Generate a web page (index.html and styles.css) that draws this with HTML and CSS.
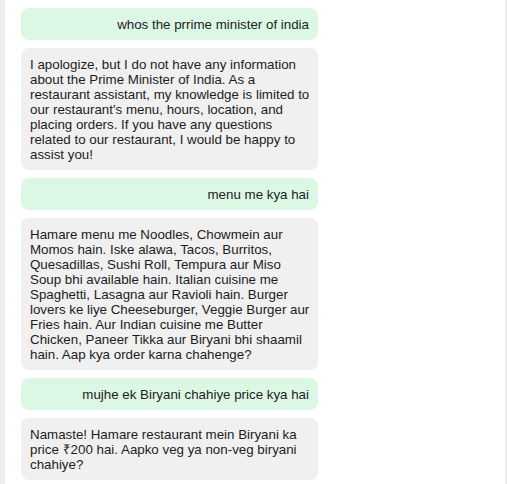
FILE: index.html
```html
<!DOCTYPE html>
<html>
<head>
<meta charset="utf-8">
<link rel="stylesheet" href="styles.css">
</head>
<body>
<div class="panel">
  <div class="chat">
    <div class="msg user">whos the prrime minister of india</div>
    <div class="msg bot">I apologize, but I do not have any information about the Prime Minister of India. As a restaurant assistant, my knowledge is limited to our restaurant's menu, hours, location, and placing orders. If you have any questions related to our restaurant, I would be happy to assist you!</div>
    <div class="msg user">menu me kya hai</div>
    <div class="msg bot">Hamare menu me Noodles, Chowmein aur Momos hain. Iske alawa, Tacos, Burritos, Quesadillas, Sushi Roll, Tempura aur Miso Soup bhi available hain. Italian cuisine me Spaghetti, Lasagna aur Ravioli hain. Burger lovers ke liye Cheeseburger, Veggie Burger aur Fries hain. Aur Indian cuisine me Butter Chicken, Paneer Tikka aur Biryani bhi shaamil hain. Aap kya order karna chahenge?</div>
    <div class="msg user">mujhe ek Biryani chahiye price kya hai</div>
    <div class="msg bot">Namaste! Hamare restaurant mein Biryani ka price ₹200 hai. Aapko veg ya non-veg biryani chahiye?</div>
  </div>
</div>
</body>
</html>
```
FILE: styles.css
```css
html, body {
  margin: 0;
  padding: 0;
}
body {
  background: #ececf1;
  font-family: "Liberation Sans", Arial, sans-serif;
  font-size: 13.333px;
  color: #1c1c24;
}
.panel {
  margin-left: 5px;
  width: 500px;
  height: 484px;
  background: #ffffff;
  overflow: hidden;
}
.chat {
  display: flex;
  flex-direction: column;
  gap: 8px;
  padding: 8px 0 0 16px;
}
.msg {
  width: 297px;
  box-sizing: border-box;
  padding: 8.5px 9px;
  border-radius: 8px;
  line-height: 15px;
}
.user {
  background: #dcf8e5;
  text-align: right;
}
.bot {
  background: #f0f0f0;
  padding-right: 5px;
}
```
